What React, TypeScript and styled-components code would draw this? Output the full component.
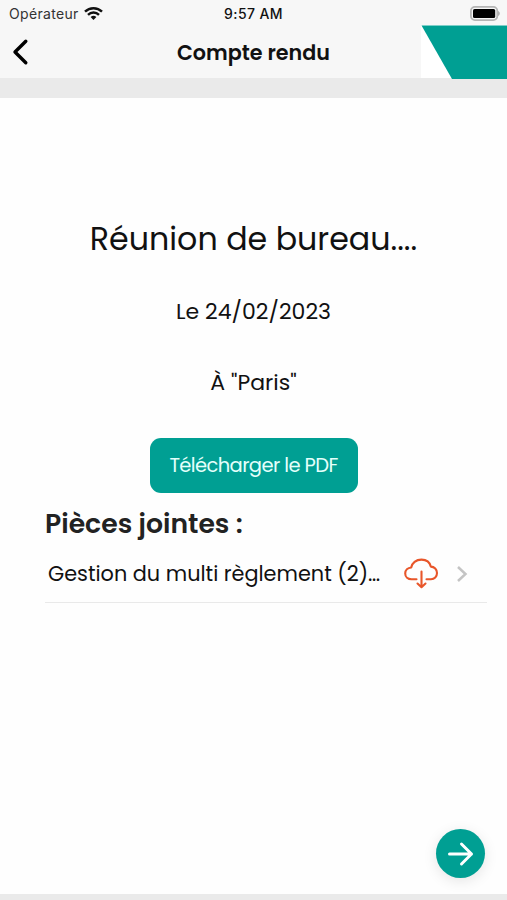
import React from 'react';
import styled, { createGlobalStyle } from 'styled-components';

const GlobalStyle = createGlobalStyle`
  * { box-sizing: border-box; }
  body { margin: 0; background: #fff; font-family: Poppins, Inter, "Liberation Sans", sans-serif; }
  h1, h2, p { margin: 0; font-weight: 400; }
  button { font: inherit; border: 0; padding: 0; background: none; }
`;

const Screen = styled.div`
  display: flex;
  flex-direction: column;
  height: 900px;
  overflow: hidden;
  background: #fefefe;
  color: #111;
`;

const StatusBar = styled.div`
  display: grid;
  grid-template-columns: 1fr auto 1fr;
  align-items: center;
  flex: none;
  height: 25px;
  padding: 2px 7px 0;
  background: #f7f7f7;
  font-family: Inter, "Liberation Sans", sans-serif;
  font-size: 14px;
`;

const Carrier = styled.div`
  display: flex;
  align-items: center;
  gap: 5px;
  padding-left: 2px;
  color: #333;
  letter-spacing: 0.32px;
`;

const Clock = styled.div`
  font-weight: 500;
  letter-spacing: 0.4px;
`;

const Battery = styled.svg`
  justify-self: end;
`;

const Header = styled.header`
  display: grid;
  grid-template-columns: 86px 1fr 86px;
  flex: none;
  height: 53px;
  background: #f7f7f7;
`;

const BackButton = styled.button`
  display: flex;
  align-items: center;
  padding-left: 11px;
`;

const HeaderTitle = styled.h1`
  align-self: center;
  padding-top: 1px;
  text-align: center;
  white-space: nowrap;
  font-size: 20.7px;
  line-height: 30px;
  font-weight: 600;
`;

const Ribbon = styled.div`
  height: 54px;
  background: #fff;

  &::before {
    content: '';
    display: block;
    height: 54px;
    background: #009f93;
    clip-path: polygon(0.5px 0.5px, 100% 0.5px, 100% 100%, 31px 100%);
  }
`;

const Band = styled.div<{ $height: number }>`
  flex: none;
  height: ${(p) => p.$height}px;
  background: #eaeaea;
`;

const Content = styled.main`
  display: flex;
  flex-direction: column;
  flex: 1;
  align-items: center;
  padding-top: 117px;
`;

const MeetingTitle = styled.h2`
  font-size: 31.7px;
  line-height: 48px;
  white-space: nowrap;
`;

const Detail = styled.p<{ $top: number }>`
  margin-top: ${(p) => p.$top}px;
  font-size: 22px;
  line-height: 32px;
`;

const DownloadButton = styled.button`
  width: 208px;
  height: 55px;
  margin-top: 39px;
  border-radius: 11px;
  background: #009f93;
  color: #e4fffb;
  font-size: 19.5px;
  letter-spacing: -0.6px;
  white-space: nowrap;
`;

const Attachments = styled.section`
  align-self: stretch;
  margin: 13px 20px 0 45px;
`;

const SectionTitle = styled.h2`
  color: #222;
  font-size: 26.7px;
  font-weight: 600;
  line-height: 36px;
`;

const FileRow = styled.div`
  display: flex;
  align-items: center;
  height: 61px;
  padding: 3px 19px 0 3px;
  border-bottom: 1px solid #e9e9e9;
`;

const FileName = styled.span`
  width: 354px;
  flex: none;
  font-size: 20.8px;
  white-space: nowrap;
`;

const Chevron = styled.svg`
  margin-left: auto;
`;

const NextButton = styled.button`
  display: flex;
  align-items: center;
  justify-content: center;
  align-self: flex-end;
  width: 49px;
  height: 49px;
  margin: auto 22px 16px 0;
  border-radius: 50%;
  background: #009f93;
  box-shadow: 0 3px 14px rgba(0, 0, 0, 0.1);
`;

export default function App() {
  return (
    <Screen>
      <GlobalStyle />
      <StatusBar>
        <Carrier>
          Opérateur
          <svg width="19" height="14" viewBox="0 0 19 14" fill="none" stroke="#111" strokeWidth="2.4">
            <path d="M1 4.700a12.200 12.200 0 0 1 17 0" />
            <path d="M4 7.800a7.800 7.800 0 0 1 11 0" />
            <path d="M6.600 10.100a4.200 4.200 0 0 1 5.800 0L9.500 13.100z" fill="#111" stroke="none" />
          </svg>
        </Carrier>
        <Clock>9:57 AM</Clock>
        <Battery width="30" height="15" viewBox="0 0 30 15">
          <rect x="0.9" y="0.9" width="26.4" height="13.2" rx="4" fill="#f7f7f7" stroke="#b5b5b5" strokeWidth="1.8" />
          <rect x="3" y="3" width="22.2" height="9" rx="1.6" fill="#000" />
          <path d="M28 5v5c2.400-1 2.400-4 0-5z" fill="#b0b0b0" />
        </Battery>
      </StatusBar>
      <Header>
        <BackButton aria-label="Retour">
          <svg width="18" height="28" viewBox="0 0 18 28" fill="none" stroke="#000" strokeWidth="3.4" strokeLinecap="round" strokeLinejoin="round">
            <path d="M14.800 3.200 4 14l10.800 10.800" />
          </svg>
        </BackButton>
        <HeaderTitle>Compte rendu</HeaderTitle>
        <Ribbon />
      </Header>
      <Band $height={20} />
      <Content>
        <MeetingTitle>Réunion de bureau....</MeetingTitle>
        <Detail $top={33}>Le 24/02/2023</Detail>
        <Detail $top={39}>À "Paris"</Detail>
        <DownloadButton>Télécharger le PDF</DownloadButton>
        <Attachments>
          <SectionTitle>Pièces jointes :</SectionTitle>
          <FileRow>
            <FileName>Gestion du multi règlement (2)…</FileName>
            <svg width="40" height="34" viewBox="0 0 40 34" fill="none" stroke="#e8562a" strokeWidth="2.1" strokeLinecap="round" strokeLinejoin="round">
              <path d="M14.500 22.300H9.500C6 22.300 3.200 20 3.200 16.600s2.600-5.900 6-6.100C10 6 14 2.600 19.500 2.600c4.700 0 8.300 2.700 9.300 7 3.600 0 6.200 2.800 6.200 6.400s-2.600 6.300-6 6.300h-4.500" />
              <path d="M19.500 14.500v15.500M15.500 26.500l4 3.700 4-3.700" />
            </svg>
            <Chevron width="12" height="18" viewBox="0 0 12 18" fill="none" stroke="#c4c4c4" strokeWidth="2.500">
              <path d="M2 2l7.500 7L2 16" />
            </Chevron>
          </FileRow>
        </Attachments>
        <NextButton aria-label="Suivant">
          <svg width="28" height="28" viewBox="0 0 28 28" fill="none" stroke="#fff" strokeWidth="3" strokeLinecap="round" strokeLinejoin="round">
            <path d="M2.500 14h22M14.500 4l10 10-10 10" />
          </svg>
        </NextButton>
      </Content>
      <Band $height={6} />
    </Screen>
  );
}
